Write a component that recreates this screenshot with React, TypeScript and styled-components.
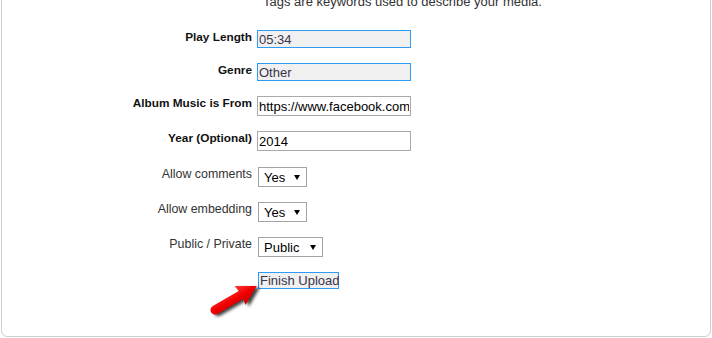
import React from "react";
import styled, { createGlobalStyle } from "styled-components";

const GlobalStyle = createGlobalStyle`
  html, body {
    margin: 0;
    padding: 0;
    background: #fff;
    overflow: hidden;
  }
  body {
    font-family: "Liberation Sans", Arial, sans-serif;
  }
`;

const App = () => {
  return (
    <>
      <GlobalStyle />
      <Card>
        <Hint>Tags are keywords used to describe your media.</Hint>

        <Form>
          <Row>
            <Label $bold>Play Length</Label>
            <TextInput $active readOnly value="05:34" />
          </Row>

          <Row>
            <Label $bold>Genre</Label>
            <TextInput $active readOnly value="Other" />
          </Row>

          <Row>
            <Label $bold>Album Music is From</Label>
            <TextInput defaultValue="https://www.facebook.com/" />
          </Row>

          <Row>
            <Label $bold>Year (Optional)</Label>
            <TextInput defaultValue="2014" />
          </Row>

          <Row $push>
            <Label>Allow comments</Label>
            <SelectWrap $width={49}>
              <Select defaultValue="Yes">
                <option>Yes</option>
                <option>No</option>
              </Select>
            </SelectWrap>
          </Row>

          <Row>
            <Label>Allow embedding</Label>
            <SelectWrap $width={49}>
              <Select defaultValue="Yes">
                <option>Yes</option>
                <option>No</option>
              </Select>
            </SelectWrap>
          </Row>

          <Row>
            <Label>Public / Private</Label>
            <SelectWrap $width={65}>
              <Select defaultValue="Public">
                <option>Public</option>
                <option>Private</option>
              </Select>
            </SelectWrap>
          </Row>

          <Row>
            <span />
            <ButtonCell>
              <Arrow width="60" height="40" viewBox="0 0 60 40">
                <defs>
                  <filter id="arrowShadow" x="-30%" y="-30%" width="160%" height="160%">
                    <feGaussianBlur stdDeviation="1.4" />
                  </filter>
                  <linearGradient id="arrowFill" x1="0" y1="0" x2="0" y2="1">
                    <stop offset="0" stopColor="#ff3a3a" />
                    <stop offset="0.5" stopColor="#f00000" />
                    <stop offset="1" stopColor="#c80000" />
                  </linearGradient>
                </defs>
                <g transform="translate(10 30) rotate(-30)">
                  <path
                    d="M0 -4.5 L30 -4.5 L29 -11 L48 0 L29 11 L30 4.5 L0 4.5 A4.5 4.5 0 0 1 0 -4.5 Z"
                    fill="#000"
                    opacity="0.75"
                    filter="url(#arrowShadow)"
                    transform="translate(2 3)"
                  />
                  <path
                    d="M0 -4.5 L30 -4.5 L29 -11 L48 0 L29 11 L30 4.5 L0 4.5 A4.5 4.5 0 0 1 0 -4.5 Z"
                    fill="url(#arrowFill)"
                  />
                </g>
              </Arrow>
              <FinishButton>Finish Upload</FinishButton>
            </ButtonCell>
          </Row>
        </Form>
      </Card>
    </>
  );
};

export default App;

const Card = styled.div`
  box-sizing: border-box;
  width: 710px;
  margin: -20px 0 0 1px;
  padding: 13px 0 47px;
  border: 1px solid #cfcfcf;
  border-radius: 6px;
`;

const Hint = styled.div`
  margin-left: 261px;
  font-size: 13px;
  line-height: 15px;
  color: #333;
  white-space: nowrap;
`;

const Form = styled.div`
  margin-top: 21px;
  display: flex;
  flex-direction: column;
  gap: 15px;
`;

const Row = styled.div<{ $push?: boolean }>`
  display: grid;
  grid-template-columns: 250px auto;
  column-gap: 5px;
  align-items: start;
  margin-top: ${(p) => (p.$push ? "1px" : "0")};
`;

const Label = styled.div<{ $bold?: boolean }>`
  text-align: right;
  font-size: ${(p) => (p.$bold ? "11.8px" : "12.4px")};
  line-height: 15px;
  padding-top: 0;
  font-weight: ${(p) => (p.$bold ? 700 : 400)};
  color: ${(p) => (p.$bold ? "#111" : "#333")};
  white-space: nowrap;
`;

const TextInput = styled.input<{ $active?: boolean }>`
  box-sizing: border-box;
  width: 154px;
  height: ${(p) => (p.$active ? "18px" : "20px")};
  margin: 0;
  padding: 0 1px;
  font-family: "Liberation Sans", Arial, sans-serif;
  font-size: 13px;
  color: ${(p) => (p.$active ? "#3a3348" : "#000")};
  background: ${(p) => (p.$active ? "#f0f0f0" : "#fff")};
  border: 1px solid ${(p) => (p.$active ? "#2e9cf4" : "#a9a9a9")};
  border-radius: 0;
  outline: none;
`;

const SelectWrap = styled.div<{ $width: number }>`
  position: relative;
  width: ${(p) => p.$width}px;
  height: 20px;
  margin-left: 1px;

  &::after {
    content: "";
    position: absolute;
    right: 7px;
    top: 8px;
    border-left: 3.5px solid transparent;
    border-right: 3.5px solid transparent;
    border-top: 5px solid #000;
    pointer-events: none;
  }
`;

const Select = styled.select`
  box-sizing: border-box;
  appearance: none;
  -webkit-appearance: none;
  width: 100%;
  height: 100%;
  margin: 0;
  padding: 1px 0 0 5px;
  font-family: "Liberation Sans", Arial, sans-serif;
  font-size: 13px;
  color: #000;
  background: #fff;
  border: 1px solid #a4a4a4;
  border-radius: 0;
  outline: none;
`;

const ButtonCell = styled.div`
  position: relative;
  display: flex;
`;

const Arrow = styled.svg`
  position: absolute;
  left: -52px;
  top: 8px;
  overflow: visible;
`;

const FinishButton = styled.button`
  box-sizing: border-box;
  width: 81px;
  height: 17px;
  margin: 0 0 0 1px;
  padding: 0 1px;
  font-family: "Liberation Sans", Arial, sans-serif;
  font-size: 13px;
  line-height: 15px;
  color: #3a3348;
  background: #f0f0f0;
  border: 1px solid #2e9cf4;
  border-radius: 0;
  white-space: nowrap;
  cursor: pointer;
`;
